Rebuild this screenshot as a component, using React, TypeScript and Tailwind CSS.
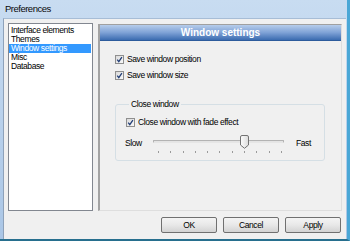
import { useState } from "react";

const pages = ["Interface elements", "Themes", "Window settings", "Misc", "Database"];

const Check = ({ checked = true }: { checked?: boolean }) => (
  <svg width="9" height="9" viewBox="0 0 9 9" className="shrink-0">
    <defs>
      <linearGradient id="cbfill" x1="0" y1="0" x2="1" y2="1">
        <stop offset="0" stopColor="#d8d8d8" />
        <stop offset="1" stopColor="#fbfbfb" />
      </linearGradient>
    </defs>
    <rect x="0.5" y="0.5" width="8" height="8" fill="url(#cbfill)" stroke="#8f8f8f" />
    {checked && (
      <path d="M2.2 4.6 L3.8 6.6 L6.9 2.1" fill="none" stroke="#233f78" strokeWidth="1.3" />
    )}
  </svg>
);

const CheckRow = ({ label }: { label: string }) => (
  <div className="flex items-center gap-[3px] h-[10px]">
    <Check />
    <span className="leading-[10px]">{label}</span>
  </div>
);

const Button = ({ children }: { children: string }) => (
  <button className="w-[56px] h-[16px] rounded-[2px] border border-[#707070] bg-gradient-to-b from-[#f4f4f4] via-[#e8e8e8] to-[#d3d3d3] text-[8.5px] tracking-[-0.4px] leading-[14px] text-black">
    {children}
  </button>
);

export default function App() {
  const [active, setActive] = useState("Window settings");

  return (
    <div className="w-[350px] h-[241px] flex flex-col bg-gradient-to-b from-[#c8dcf1] to-[#aac6e6] border-r-[3px] border-r-[#4aa7d6] border-b-2 border-b-[#276f8e] font-['Liberation_Sans',sans-serif] text-[8.5px] tracking-[-0.4px] text-black">
      {/* title bar */}
      <div className="h-[18px] flex items-center pl-[5px] text-[9.5px] tracking-[-0.5px] text-[#0a0a0a] shrink-0">Preferences</div>

      {/* client area */}
      <div className="flex-1 ml-[3px] mr-px bg-[#f0f0f0] border-l border-l-[#8ea2ba] border-t border-t-[#a7bdd6] flex flex-col pl-[4px] pr-[4px] pt-[4px]">
        <div className="flex gap-[5px] h-[188px]">
          {/* page list */}
          <div className="w-[85px] h-full border border-[#828790] bg-white pt-[2px] pr-px">
            {pages.map((p) => (
              <div
                key={p}
                onClick={() => setActive(p)}
                className={`h-[9px] leading-[9px] pl-[2px] whitespace-nowrap cursor-default ${
                  active === p ? "bg-[#3399ff] text-white" : "text-black"
                }`}
              >
                {p}
              </div>
            ))}
          </div>

          {/* settings panel */}
          <div className="w-[244px] h-[187px] mt-px border-l-2 border-t border-l-[#a3a3a3] border-t-[#a0a0a0] border-r border-b border-r-[#dedede] border-b-[#dedede] flex flex-col">
            <div className="h-[16px] bg-gradient-to-b from-[#b7cdeb] via-[#7fa2d6] to-[#3b6cb0] border-b border-b-[#2c5b9c] flex items-center justify-center text-white font-bold text-[10px] tracking-normal">
              {active}
            </div>

            <div className="flex flex-col gap-[6px] pl-[15px] pt-[13px]">
              <CheckRow label="Save window position" />
              <CheckRow label="Save window size" />
            </div>

            <fieldset className="ml-[15px] mt-[19px] w-[210px] border border-[#d5dfe5] rounded-[3px] pl-[9px] pb-[6px]">
              <legend className="ml-[4px] px-[2px] leading-[10px]">Close window</legend>
              <div className="pt-[8px] pl-px">
                <CheckRow label="Close window with fade effect" />
              </div>
              <div className="flex items-start mt-[7px] h-[20px]">
                <span className="mt-[4px] leading-[10px] w-[28px]">Slow</span>
                <div className="relative w-[131px] h-[20px]">
                  <div className="absolute left-0 right-0 top-[6px] h-[3px] border border-[#b3b3b3] border-b-[#e6e6e6] bg-[#e4e4e4] rounded-[1px]" />
                  <div className="absolute left-[5px] right-[2px] top-[17px] h-[2px] flex justify-between">
                    {Array.from({ length: 11 }).map((_, i) => (
                      <div key={i} className="w-px h-[2px] bg-[#9a9a9a]" />
                    ))}
                  </div>
                  <svg width="9" height="14" viewBox="0 0 9 14" className="absolute left-[87px] top-[1px]">
                    <defs>
                      <linearGradient id="thumb" x1="0" y1="0" x2="1" y2="0">
                        <stop offset="0" stopColor="#fdfdfd" />
                        <stop offset="1" stopColor="#dcdcdc" />
                      </linearGradient>
                    </defs>
                    <path
                      d="M2 0.5 H7 Q8.5 0.5 8.5 2 V10 L4.5 13.3 L0.5 10 V2 Q0.5 0.5 2 0.5 Z"
                      fill="url(#thumb)"
                      stroke="#737373"
                    />
                  </svg>
                </div>
                <span className="mt-[4px] leading-[10px] ml-[12px]">Fast</span>
              </div>
            </fieldset>
          </div>
        </div>

        <div className="flex justify-end gap-[6px] mt-[6px] pr-px">
          <Button>OK</Button>
          <Button>Cancel</Button>
          <Button>Apply</Button>
        </div>
      </div>
    </div>
  );
}
